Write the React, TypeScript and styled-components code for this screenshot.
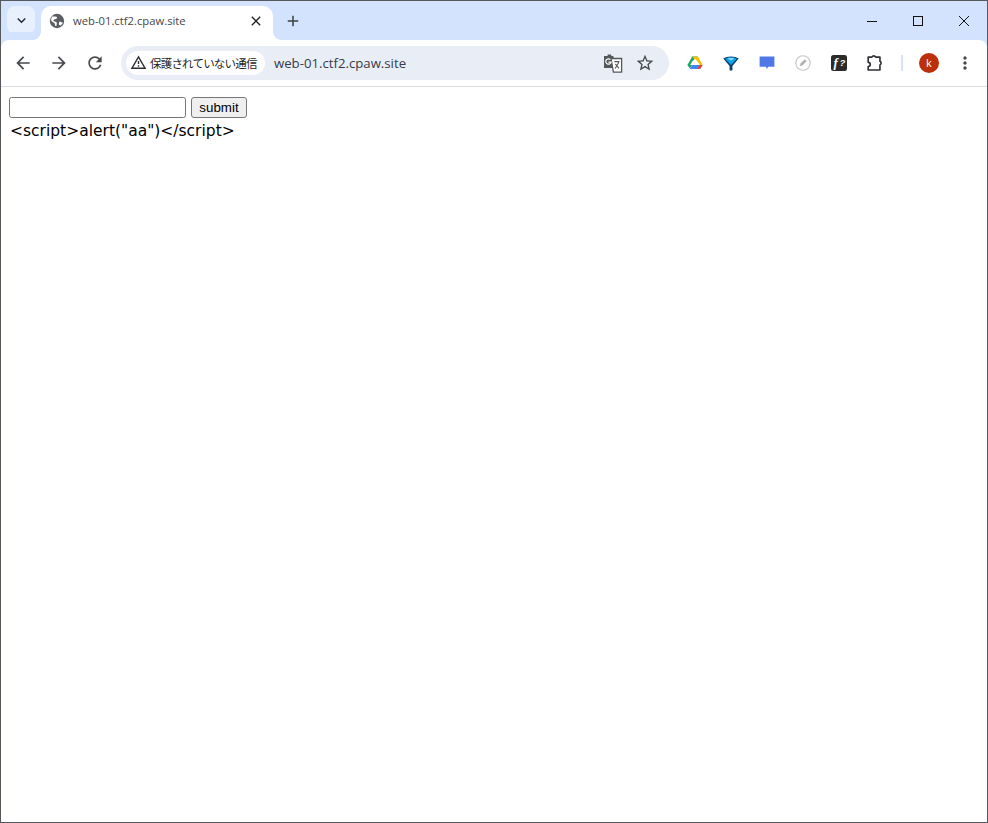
import React from 'react';
import styled, { createGlobalStyle } from 'styled-components';

const GlobalStyle = createGlobalStyle`
    html, body {
        margin: 0;
        padding: 0;
        background: #fff;
    }
    * {
        box-sizing: border-box;
    }
`;

const Chrome = styled.div`
    width: 988px;
    height: 823px;
    display: flex;
    flex-direction: column;
    border: 1px solid #55585c;
    background: #fff;
    overflow: hidden;
`;

const TabStrip = styled.div`
    height: 39px;
    flex: none;
    display: flex;
    align-items: flex-start;
    padding: 5px 0 0 6px;
    background: #d3e3fd;
`;

const TabSearch = styled.button`
    width: 28px;
    height: 28px;
    margin-right: 6px;
    padding: 0;
    border: 0;
    border-radius: 8px;
    background: #e9f0fd;
    display: flex;
    align-items: center;
    justify-content: center;
`;

const Tab = styled.div`
    position: relative;
    width: 232px;
    height: 34px;
    display: flex;
    align-items: center;
    padding: 0 9px 4px 8px;
    background: #fff;
    border-radius: 10px 10px 0 0;

    &::before,
    &::after {
        content: '';
        position: absolute;
        bottom: 0;
        width: 8px;
        height: 8px;
        background: radial-gradient(circle at var(--cx) 0, #d3e3fd 7.5px, #fff 8px);
    }
    &::before {
        --cx: 0;
        left: -8px;
    }
    &::after {
        --cx: 100%;
        right: -8px;
    }
`;

const TabTitle = styled.span`
    flex: 1;
    margin-left: 8px;
    font: 11.25px/16px "Open Sans", "Liberation Sans", sans-serif;
    color: #45474a;
    white-space: nowrap;
`;

const NewTab = styled.div`
    width: 24px;
    height: 24px;
    margin: 3px 0 0 8px;
    display: flex;
    align-items: center;
    justify-content: center;
`;

const WindowControls = styled.div`
    margin-left: auto;
    display: flex;
    height: 30px;
`;

const WindowButton = styled.div`
    width: 46px;
    height: 30px;
    display: flex;
    align-items: center;
    justify-content: center;
`;

const Toolbar = styled.div`
    height: 47px;
    flex: none;
    display: flex;
    align-items: center;
    padding: 0 4px 1px 4px;
    background: #fff;
    border-bottom: 1px solid #d9dbde;
    border-radius: 8px 8px 0 0;
    box-shadow: 0 -8px 0 #d3e3fd;
`;

const NavButton = styled.div`
    width: 36px;
    height: 36px;
    flex: none;
    display: flex;
    align-items: center;
    justify-content: center;
    color: #474a4d;
`;

const Omnibox = styled.div`
    width: 548px;
    height: 34px;
    margin: 0 8px;
    flex: none;
    display: flex;
    align-items: center;
    padding: 0 8px 0 5px;
    border-radius: 17px;
    background: #e9eef6;
`;

const SecurityChip = styled.div`
    height: 24px;
    width: 139px;
    flex: none;
    display: flex;
    align-items: center;
    gap: 3px;
    padding-left: 4px;
    border-radius: 12px;
    background: #fff;
    font: 11.5px/24px "Noto Sans CJK JP", sans-serif;
    letter-spacing: -0.8px;
    color: #1f1f1f;
    white-space: nowrap;
`;

const Url = styled.span`
    flex: 1;
    margin-left: 9px;
    font: 13.2px/20px "Open Sans", "Liberation Sans", sans-serif;
    color: #363b47;
`;

const OmniIcon = styled.div`
    width: 32px;
    height: 32px;
    flex: none;
    display: flex;
    align-items: center;
    justify-content: center;
    color: #474a4d;
`;

const ExtButton = styled.div`
    width: 36px;
    height: 36px;
    flex: none;
    display: flex;
    align-items: center;
    justify-content: center;
`;

const Divider = styled.div`
    width: 2px;
    height: 16px;
    margin: 0 8px;
    flex: none;
    background: #d3e3fd;
`;

const Avatar = styled.div`
    width: 20px;
    height: 20px;
    border-radius: 50%;
    background: #bb2f0a;
    color: #fff;
    font: 11px/20px "Open Sans", sans-serif;
    text-align: center;
`;

const Page = styled.main`
    flex: 1;
    padding: 10px 8px;
    background: #fff;
`;

const SearchForm = styled.form`
    display: flex;
    align-items: center;
    gap: 5px;
    height: 21px;
`;

const TextField = styled.input`
    width: 177px;
    height: 21px;
    padding: 1px 2px;
    background: #fff;
    border: 1px solid #767676;
    border-radius: 2.5px;
    font: 13.33px "Liberation Sans", Arial, sans-serif;
`;

const SubmitButton = styled.button`
    width: 56px;
    height: 21px;
    padding: 0;
    background: #efefef;
    border: 1px solid #767676;
    border-radius: 3px;
    font: 13.33px "Liberation Sans", Arial, sans-serif;
    color: #000;
`;

const Output = styled.div`
    margin-top: 2px;
    padding-left: 1px;
    font: 15.5px/22px "DejaVu Sans", "Noto Sans", sans-serif;
    color: #000;
    white-space: nowrap;
`;

const Icon: React.FC<{ d: string; size?: number; color?: string }> = ({ d, size = 20, color = 'currentColor' }) => (
    <svg width={size} height={size} viewBox="0 0 24 24" fill={color}>
        <path d={d} />
    </svg>
);

const GlobeIcon = () => (
    <svg width="16" height="16" viewBox="0 0 16 16">
        <circle cx="8" cy="8" r="7.2" fill="#5b5e63" />
        <path d="M3.2 3.4c1.4.2 3-.2 4.2.4 1 .6.6 1.8-.4 2.2-1 .3-2.2.2-2.5 1.2-.2.9.8 1.3 1.9 1.5 1.2.2 1.6 1 1.4 2l-.4 2.4-1.3-.3c-.1-1.4-.2-2.4-1.1-3C4 9 2.6 8.6 2.2 7.4c-.1-1.4.2-2.9 1-4zM14 9.6c-.9.3-1.6-.4-2.4-.8-.9-.4-1.6.1-1.6 1.1l-.2 1.6 1.5 1c1.4-.7 2.4-1.7 2.7-2.9z" fill="#fff" />
    </svg>
);

const TranslateIcon = () => (
    <svg width="20" height="20" viewBox="0 0 20 20">
        <path d="M1 3h3.6V1.4h3.2L8.6 3h1.6l4 12H1z" fill="#55585b" />
        <path d="M8 5.5h10.6v13.6H10.4z" fill="#fff" stroke="#55585b" strokeWidth="1.3" />
        <path d="M7.4 6.6a2.7 2.7 0 1 0 .7 2.6H5.4" stroke="#fff" strokeWidth="1.2" fill="none" />
        <path d="M11.4 8.6h5M12.2 15.6l3.6-6.4M12.4 11l3.6 4.4" stroke="#55585b" strokeWidth="1.1" fill="none" />
    </svg>
);

const DriveIcon = () => (
    <svg width="16" height="14" viewBox="0 0 16 14">
        <path d="M5.3 0.5h5.4L8 5.2 6.6 7.6 4.5 4z" fill="#0f9d58" />
        <path d="M5.3 0.5L0.4 9l2.4 3.6L6.6 7z" fill="#1fa463" />
        <path d="M5.4 0.5h5.2l2.2 4H8z" fill="#fbbc04" />
        <path d="M10.7 0.5L15.6 9h-4.9L8 4.6z" fill="#fbbc04" />
        <path d="M5.2 9h10.4l-2.4 4H2.8z" fill="#4285f4" />
        <path d="M13 13l2.6-4h-3.5l-1.6 4z" fill="#ea4335" />
        <path d="M5.4 5.2L8 2.8l2.5 2.6L12.8 9H3.2z" fill="#fff" />
    </svg>
);

const GemIcon = () => (
    <svg width="16" height="16" viewBox="0 0 16 16">
        <path d="M0.3 3.6C2 2.2 5 1.4 8 1.4s6 .8 7.7 2.2L9.4 11v4.4H6.6V11z" fill="#0b3f6b" />
        <path d="M2 3.8C3.6 2.8 5.8 2.2 8 2.2s4.4.6 6 1.6L8 10z" fill="#0aa2e6" />
        <path d="M4.6 3.4C6.6 2.8 9.4 2.8 11.4 3.4L8 5.6z" fill="#8edbf9" />
    </svg>
);

const CommentIcon = () => (
    <svg width="16" height="15" viewBox="0 0 16 15">
        <path d="M0.6 1.6h14.8v10.2H9.1L8 14l-1.1-2.2H0.6z" fill="#5077e6" />
    </svg>
);

const PenBadgeIcon = () => (
    <svg width="16" height="16" viewBox="0 0 16 16">
        <circle cx="8" cy="8" r="7.2" fill="#fff" stroke="#c4c4c4" strokeWidth="1.1" />
        <path d="M4.7 11.3l1-3 4-4 2 2-4 4z" fill="#b2b2b2" />
    </svg>
);

const FontIcon = () => (
    <svg width="16" height="16" viewBox="0 0 16 16">
        <rect width="16" height="16" rx="2.5" fill="#2b2b2b" />
        <text x="2.6" y="12.2" fontFamily="'Liberation Serif', serif" fontStyle="italic" fontWeight="700" fontSize="13" fill="#fff">f</text>
        <text x="8.6" y="11" fontFamily="'Liberation Sans', sans-serif" fontWeight="700" fontSize="9.5" fontStyle="italic" fill="#fff">?</text>
    </svg>
);

const PuzzleIcon = () => (
    <svg width="22" height="22" viewBox="0 0 20 20" fill="none" stroke="#2f3134" strokeWidth="1.5" strokeLinejoin="round">
        <path d="M3.8 4.6h3.4a1.9 1.9 0 0 1 3.4 0h3.9v3.8a1.9 1.9 0 0 1 0 3.4v4.6H3.8v-3.2c1.5-.2 1.9-1 1.9-1.9s-.5-1.8-1.9-1.9z" />
    </svg>
);

const App: React.FC = () => {
    return (
        <>
            <GlobalStyle />
            <Chrome>
                <TabStrip>
                    <TabSearch>
                        <Icon d="M7.4 8.6L12 13.2l4.6-4.6L18 10l-6 6-6-6z" size={17} color="#1f2937" />
                    </TabSearch>
                    <Tab>
                        <GlobeIcon />
                        <TabTitle>web-01.ctf2.cpaw.site</TabTitle>
                        <Icon d="M19 6.41L17.59 5 12 10.59 6.41 5 5 6.41 10.59 12 5 17.59 6.41 19 12 13.41 17.59 19 19 17.59 13.41 12z" size={16} color="#202124" />
                    </Tab>
                    <NewTab>
                        <Icon d="M19 13h-6v6h-2v-6H5v-2h6V5h2v6h6v2z" size={18} color="#3c4043" />
                    </NewTab>
                    <WindowControls>
                        <WindowButton>
                            <svg width="10" height="10" viewBox="0 0 10 10"><path d="M0 5.5h10" stroke="#111" /></svg>
                        </WindowButton>
                        <WindowButton>
                            <svg width="10" height="10" viewBox="0 0 10 10"><rect x=".5" y=".5" width="9" height="9" fill="none" stroke="#111" /></svg>
                        </WindowButton>
                        <WindowButton>
                            <svg width="10" height="10" viewBox="0 0 10 10"><path d="M0 0l10 10M10 0L0 10" stroke="#111" /></svg>
                        </WindowButton>
                    </WindowControls>
                </TabStrip>
                <Toolbar>
                    <NavButton>
                        <Icon d="M20 11H7.83l5.59-5.59L12 4l-8 8 8 8 1.41-1.41L7.83 13H20v-2z" />
                    </NavButton>
                    <NavButton>
                        <Icon d="M12 4l-1.41 1.41L16.17 11H4v2h12.17l-5.58 5.59L12 20l8-8z" />
                    </NavButton>
                    <NavButton>
                        <Icon d="M17.65 6.35C16.2 4.9 14.21 4 12 4c-4.42 0-7.99 3.58-7.99 8s3.57 8 7.99 8c3.73 0 6.84-2.55 7.73-6h-2.08c-.82 2.33-3.04 4-5.65 4-3.31 0-6-2.69-6-6s2.69-6 6-6c1.66 0 3.14.69 4.22 1.78L13 11h7V4l-2.35 2.35z" />
                    </NavButton>
                    <Omnibox>
                        <SecurityChip>
                            <Icon d="M12 5.99L19.53 19H4.47L12 5.99M12 2L1 21h22L12 2zm1 14h-2v2h2v-2zm0-6h-2v4h2v-4z" size={17} color="#2b2d30" />
                            保護されていない通信
                        </SecurityChip>
                        <Url>web-01.ctf2.cpaw.site</Url>
                        <OmniIcon><TranslateIcon /></OmniIcon>
                        <OmniIcon>
                            <Icon d="M22 9.24l-7.19-.62L12 2 9.19 8.63 2 9.24l5.46 4.73L5.82 21 12 17.27 18.18 21l-1.63-7.03L22 9.24zM12 15.4l-3.76 2.27 1-4.28-3.32-2.88 4.38-.38L12 6.1l1.71 4.04 4.38.38-3.32 2.88 1 4.28L12 15.4z" />
                        </OmniIcon>
                    </Omnibox>
                    <ExtButton><DriveIcon /></ExtButton>
                    <ExtButton><GemIcon /></ExtButton>
                    <ExtButton><CommentIcon /></ExtButton>
                    <ExtButton><PenBadgeIcon /></ExtButton>
                    <ExtButton><FontIcon /></ExtButton>
                    <ExtButton><PuzzleIcon /></ExtButton>
                    <Divider />
                    <ExtButton><Avatar>k</Avatar></ExtButton>
                    <ExtButton>
                        <Icon d="M12 8c1.1 0 2-.9 2-2s-.9-2-2-2-2 .9-2 2 .9 2 2 2zm0 2c-1.1 0-2 .9-2 2s.9 2 2 2 2-.9 2-2-.9-2-2-2zm0 6c-1.1 0-2 .9-2 2s.9 2 2 2 2-.9 2-2-.9-2-2-2z" color="#474a4d" />
                    </ExtButton>
                </Toolbar>
                <Page>
                    <SearchForm onSubmit={(e) => e.preventDefault()}>
                        <TextField type="text" />
                        <SubmitButton type="submit">submit</SubmitButton>
                    </SearchForm>
                    <Output>{'<script>alert("aa")</script>'}</Output>
                </Page>
            </Chrome>
        </>
    );
};

export default App;
